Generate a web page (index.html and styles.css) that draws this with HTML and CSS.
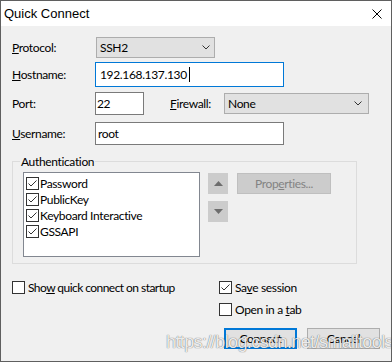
FILE: index.html
```html
<!DOCTYPE html>
<html lang="en">
<head>
  <meta charset="UTF-8">
  <title>Quick Connect</title>
  <link rel="stylesheet" href="styles.css">
</head>
<body>

  <div class="dialog">
    <div class="titlebar">
      <span class="title">Quick Connect</span>
      <svg class="close" width="10" height="10" viewBox="0 0 10 10">
        <path d="M0.5 0.5L9.5 9.5M9.5 0.5L0.5 9.5" stroke="#000" stroke-width="1" fill="none"/>
      </svg>
    </div>

    <div class="content">
      <div class="row row-protocol">
        <span class="label"><u>P</u>rotocol:</span>
        <div class="combo combo-protocol">
          <span>SSH2</span>
          <svg width="8" height="5" viewBox="0 0 8 5"><path d="M0.5 0.5L4 4L7.5 0.5" stroke="#333" fill="none"/></svg>
        </div>
      </div>

      <div class="row row-host">
        <span class="label"><u>H</u>ostname:</span>
        <div class="field field-host"><span>192.168.137.130</span><span class="caret"></span></div>
      </div>

      <div class="row row-port">
        <span class="label">Port:</span>
        <div class="field field-port"><span>22</span></div>
        <span class="label label-fw"><u>F</u>irewall:</span>
        <div class="combo combo-fw">
          <span>None</span>
          <svg width="8" height="5" viewBox="0 0 8 5"><path d="M0.5 0.5L4 4L7.5 0.5" stroke="#333" fill="none"/></svg>
        </div>
      </div>

      <div class="row row-user">
        <span class="label"><u>U</u>sername:</span>
        <div class="field field-user"><span>root</span></div>
      </div>

      <div class="group">
        <span class="legend">Authentication</span>
        <ul class="listbox">
          <li><span class="check"><svg width="11" height="11" viewBox="0 0 11 11"><path d="M1.5 5.5L4 8L9.5 2.5" stroke="#333" fill="none"/></svg></span><span>Password</span></li>
          <li><span class="check"><svg width="11" height="11" viewBox="0 0 11 11"><path d="M1.5 5.5L4 8L9.5 2.5" stroke="#333" fill="none"/></svg></span><span>PublicKey</span></li>
          <li><span class="check"><svg width="11" height="11" viewBox="0 0 11 11"><path d="M1.5 5.5L4 8L9.5 2.5" stroke="#333" fill="none"/></svg></span><span>Keyboard Interactive</span></li>
          <li><span class="check"><svg width="11" height="11" viewBox="0 0 11 11"><path d="M1.5 5.5L4 8L9.5 2.5" stroke="#333" fill="none"/></svg></span><span>GSSAPI</span></li>
        </ul>
        <div class="arrows">
          <div class="arrow"><svg width="9" height="5" viewBox="0 0 9 5"><path d="M0 5L4.5 0L9 5Z" fill="#6d6d6d"/></svg></div>
          <div class="arrow"><svg width="9" height="5" viewBox="0 0 9 5"><path d="M0 0L9 0L4.5 5Z" fill="#6d6d6d"/></svg></div>
        </div>
        <div class="btn btn-props"><span>Prop<u>e</u>rties...</span></div>
      </div>

      <div class="options">
        <div class="opt-left">
          <div class="option"><span class="check"></span><span class="opt-long">Sho<u>w</u> quick connect on startup</span></div>
        </div>
        <div class="opt-right">
          <div class="option"><span class="check"><svg width="11" height="11" viewBox="0 0 11 11"><path d="M1.5 5.5L4 8L9.5 2.5" stroke="#333" fill="none"/></svg></span><span>Sa<u>v</u>e session</span></div>
          <div class="option"><span class="check"></span><span>Open in a <u>t</u>ab</span></div>
        </div>
      </div>

      <div class="buttons">
        <div class="btn btn-default"><span>Connect</span></div>
        <div class="btn"><span>Cancel</span></div>
      </div>
    </div>

    <span class="watermark">https://blog.csdn.net/smalltools</span>
  </div>

</body>
</html>
```

FILE: styles.css
```css
body {
  margin: 0;
  background: #f0f0f0;
}

.dialog {
  position: relative;
  width: 392px;
  height: 362px;
  box-sizing: border-box;
  border: 1px solid #5f5f5f;
  background: #f0f0f0;
  font-family: Lato, "Liberation Sans", sans-serif;
  font-size: 12px;
  letter-spacing: -0.35px;
  color: #000;
  overflow: hidden;
}

.titlebar {
  height: 25px;
  background: #fff;
  display: flex;
  align-items: center;
  justify-content: space-between;
  padding: 0 9px 0 3px;
}

.title {
  font-family: "Liberation Sans", sans-serif;
  font-size: 13px;
  letter-spacing: 0;
}

.content {
  padding: 11px 11px 0 11px;
}

.row {
  display: flex;
  align-items: center;
}

.label {
  flex: none;
  width: 83px;
}

.combo {
  box-sizing: border-box;
  height: 21px;
  display: flex;
  align-items: center;
  justify-content: space-between;
  background: #e1e1e1;
  border: 1px solid #adadad;
  padding: 0 5px 0 3px;
}

.field {
  box-sizing: border-box;
  display: flex;
  align-items: center;
  background: #fff;
  border: 1px solid #7a7a7a;
}

.row-protocol { height: 21px; }
.combo-protocol { width: 119px; margin-left: 1px; padding-right: 4px; }

.row-host { height: 25px; margin-top: 4px; }
.field-host {
  width: 189px;
  height: 25px;
  padding-left: 4px;
  border-color: #0078d7;
}
.caret {
  width: 1px;
  height: 15px;
  background: #000;
  margin-left: 2px;
}

.row-port { height: 23px; margin-top: 5px; }
.field-port { width: 49px; height: 23px; padding-left: 1px; }
.label-fw { width: 54px; margin-left: 26px; }
.combo-fw { width: 145px; padding-right: 6px; }

.row-user { height: 23px; margin-top: 7px; }
.field-user { width: 189px; height: 23px; padding-left: 2px; }

.group {
  position: relative;
  margin-top: 16px;
  width: 345px;
  height: 103px;
  box-sizing: border-box;
  border: 1px solid #dcdcdc;
  padding: 10px 0 0 10px;
  display: flex;
  align-items: flex-start;
}

.legend {
  position: absolute;
  top: -8px;
  left: 7px;
  padding: 0 1px;
  line-height: 15px;
  background: #f0f0f0;
}

.listbox {
  width: 177px;
  height: 85px;
  box-sizing: border-box;
  margin: 0;
  padding: 2px 0 0 2px;
  list-style: none;
  background: #fff;
  border: 1px solid #828790;
}

.listbox li {
  height: 16px;
  display: flex;
  align-items: center;
  gap: 1px;
}

.check {
  flex: none;
  width: 13px;
  height: 13px;
  box-sizing: border-box;
  border: 1px solid #333;
  background: #fff;
  display: flex;
}

.arrows {
  margin: 1px 0 0 8px;
  display: flex;
  flex-direction: column;
  gap: 7px;
}

.arrow {
  width: 20px;
  height: 21px;
  background: #cccccc;
  display: flex;
  align-items: center;
  justify-content: center;
}

.btn {
  box-sizing: border-box;
  width: 73px;
  height: 21px;
  display: flex;
  align-items: center;
  justify-content: center;
  background: #e1e1e1;
  border: 1px solid #adadad;
}

.btn-props {
  width: 94px;
  margin: 1px 0 0 9px;
  background: #cccccc;
  border-color: #bfbfbf;
  color: #838383;
}

.btn-default {
  border: 2px solid #0078d7;
}

.options {
  margin-top: 17px;
  display: flex;
}

.opt-left {
  width: 207px;
}

.opt-long {
  letter-spacing: -0.55px;
}

.opt-right {
  display: flex;
  flex-direction: column;
  gap: 9px;
}

.option {
  height: 13px;
  display: flex;
  align-items: center;
  gap: 3px;
}

.buttons {
  margin-top: 12px;
  display: flex;
  justify-content: flex-end;
  gap: 10px;
}

.watermark {
  position: absolute;
  left: 165px;
  top: 332px;
  font-family: "Liberation Sans", sans-serif;
  font-size: 18px;
  line-height: 18px;
  letter-spacing: -0.6px;
  color: rgba(255, 255, 255, 0.9);
  text-shadow: 0 0 1px rgba(0, 0, 0, 0.5), 0 0 1px rgba(0, 0, 0, 0.3);
  white-space: nowrap;
}
```
